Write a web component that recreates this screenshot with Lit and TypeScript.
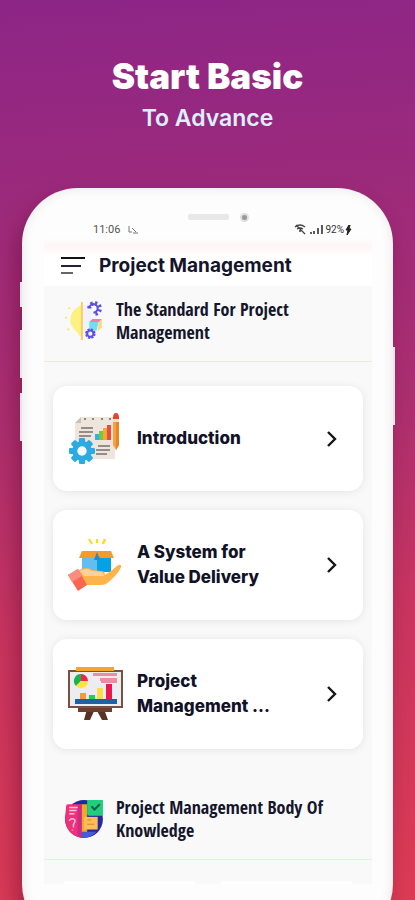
import { LitElement, html, css, svg } from "lit";
import { customElement } from "lit/decorators.js";

const gear = (cx: number, cy: number, r: number, color: string, hole: string) => svg`
  <g transform="translate(${cx} ${cy})" fill=${color}>
    ${[0, 45, 90, 135].map(
      (a) => svg`<rect x=${-r * 0.24} y=${-r} width=${r * 0.48} height=${r * 2} rx=${r * 0.1} transform="rotate(${a})"/>`
    )}
    <circle r=${r * 0.76}/><circle r=${r * 0.36} fill=${hole}/>
  </g>`;

const ideaIcon = html`<svg viewBox="0 0 38 38" aria-hidden="true">
  <path d="M17 4v29h-3c0-4-8-7-8-14S10 6 17 4z" fill="#fdf27f"/>
  <path d="M17 1v36" stroke="#f8cf62" stroke-width="2"/>
  <g fill="#fbe36a"><circle cx="5" cy="7" r="1"/><circle cx="2" cy="16" r="1"/><circle cx="4" cy="27" r="1"/></g>
  <path d="M18 4h8v28h-8z" fill="#f3f1ff"/>
  <path d="M24 20l3-3h9l-2 3z" fill="#f17fae"/><path d="M24 20h9l-2 8h-7z" fill="#77dcf0"/><path d="M33 20l3-3v8l-4 4z" fill="#f8dc83"/>
  <g fill="none" stroke="#5a50e6">
    <path d="M24 7a4 4 0 1 1 4 4" stroke-width="2"/>
    <path d="M24 7a5 5 0 1 1 4 5" stroke-width="4" stroke-dasharray="2 2"/>
    <circle cx="25" cy="31" r="3" stroke-width="2"/><circle cx="25" cy="31" r="4" stroke-width="2" stroke-dasharray="2 1.15"/>
  </g>
</svg>`;

const bookIcon = html`<svg viewBox="0 0 38 38" aria-hidden="true">
  <circle cx="19" cy="19" r="18" fill="#26299b"/>
  <path d="M2 7q0-2 2-2h13v32Q2 34 1 19z" fill="#f22f79"/><path d="M13 6h4v31l-4-2z" fill="#c92c83"/>
  <path d="M17 5h5v27h-5z" fill="#f4a62a"/>
  <path d="M19 17h13v12H19z" fill="#fdbd59"/><path d="M17 31h14q-6 6-14 6z" fill="#465bd8"/>
  <path d="M22 1h15v15H24q-2 0-2-2z" fill="#20cf7d"/>
  <path d="M26 7l3 3 5-5" fill="none" stroke="#14624e" stroke-width="2"/>
  <g fill="none" stroke="#ffc7dc" stroke-width="1.4"><path d="M5 8h8M5 11h7M5 14h5M5 21q1-3 4-2t0 5v3M8 29v1"/></g>
  <path d="M22 20h4M22 24h7" stroke="#d9892c"/>
</svg>`;

const reportIcon = html`<svg viewBox="0 0 56 56" aria-hidden="true">
  <path d="M14 6h34v42H8V12z" fill="#eee5dc"/><path d="M14 6v6H8z" fill="#cdbfb3"/>
  <path d="M17 8h2M25 8h2M34 8h2M42 8h2" stroke="#8d8580" stroke-width="2"/>
  <path d="M14 17h12M12 21h14M12 25h12M31 35h12M29 39h14M29 43h11" stroke="#77706d" stroke-width="1.4"/>
  <path d="M28 23h4v6h-4z" fill="#28b5ee"/><path d="M32 20h4v9h-4z" fill="#73c83c"/><path d="M36 17h4v12h-4z" fill="#f5a637"/><path d="M40 14h4v15h-4z" fill="#ed493c"/>
  <path d="M46 9h6v25l-3 5-3-5z" fill="#f7a13a"/><path d="M49 9h3v25l-3 5z" fill="#e98428"/><path d="M46 8h6v3h-6z" fill="#dce3e6"/><path d="M46 7q0-5 3-5t3 5v1h-6z" fill="#e44235"/>
  ${gear(15, 40, 13, "#2babe2", "#f3fbff")}
</svg>`;

const deliveryIcon = html`<svg viewBox="0 0 56 56" aria-hidden="true">
  <path d="M22 2l3 5M30 2v4M38 2l-2 5" stroke="#ffd82b" stroke-width="2.4"/>
  <path d="M15 19h15v16H15z" fill="#62bdf1"/><path d="M30 19h14v16H30z" fill="#05a1e5"/>
  <path d="M15 14h29l3 7H33l-3-4-3 4H12z" fill="#f59a2c"/><path d="M30 15l3 8h-6z" fill="#278bc7"/>
  <path d="M10 35q8-7 15-2l9 1q4 0 4 4 9-6 13-10 4-1 3 2-3 8-15 17-2 1-6 1H19z" fill="#feb34b"/>
  <path d="M13 34q7-4 12 0l9 1q3 1 3 4H17z" fill="#ffd19a"/>
  <path d="M1 38l10-6 9 16-9 6z" fill="#f86750"/><path d="M1 38l10-6 4 7-10 6z" fill="#fa8d7d"/>
</svg>`;

const boardIcon = html`<svg viewBox="0 0 56 56" aria-hidden="true">
  <path d="M20 43h8l-5 11h-6zM29 43h8l4 11h-6z" fill="#583225"/>
  <path d="M11 41h34v5H11z" fill="#6c3e2c"/>
  <path d="M1 4h55v38H1z" fill="#78513f"/><path d="M3 6h51v34H3z" fill="#ecedf1"/>
  <path d="M9 1h38v4H9z" fill="#f6a22d"/>
  <path d="M14 15V8a7 7 0 0 1 7 7z" fill="#ef234d"/>
  <path d="M14 15V8a7 7 0 0 0-5 12z" fill="#16b64c"/><path d="M14 15h7a7 7 0 0 1-12 5z" fill="#ffe340"/>
  <path d="M26 7h24v3H26zM33 12h17v3H33zM34 15h16v2H34z" fill="#ee8da0"/>
  <path d="M13 27h6v7h-6z" fill="#f69b33"/><path d="M22 29h6v5h-6z" fill="#1ad647"/><path d="M30 22h6v12h-6z" fill="#ffdc48"/><path d="M39 18h6v16h-6z" fill="#eb174f"/>
  <path d="M8 33h42v5H8z" fill="#1c62a8"/>
</svg>`;

@customElement("section-heading")
class SectionHeading extends LitElement {
  static properties = { label: {}, icon: { attribute: false } };
  declare label: string;
  declare icon: unknown;
  static styles = css`
    :host { display: block; border-bottom: 1px solid #fce3d6; }
    .row { display: flex; align-items: center; gap: 12px; padding: 12px 24px 17px 20px; min-height: 46px; }
    .icon { width: 40px; flex: none; }
    .icon svg { display: block; width: 40px; height: 40px; }
    h2 { margin: 0; color: #15152b; font: 700 18px/23px "Open Sans Condensed", "Liberation Sans Narrow", "Liberation Sans", sans-serif; }
  `;
  render() {
    return html`<div class="row"><div class="icon">${this.icon}</div><h2>${this.label}</h2></div>`;
  }
}

@customElement("topic-card")
class TopicCard extends LitElement {
  static properties = { label: {}, icon: { attribute: false } };
  declare label: string;
  declare icon: unknown;
  static styles = css`
    :host { display: block; }
    button { box-sizing: border-box; width: 100%; min-height: 105px; padding: 30px 25px 30px 14px; display: flex; align-items: center; gap: 14px;
      border: 0; border-radius: 14px; background: #fff; box-shadow: 0 1px 8px #00000016; text-align: left; color: #111127;
      font: 800 17px/25px Inter, "Open Sans", sans-serif; }
    .icon { display: block; width: 56px; height: 56px; flex: none; margin: -6px 0; }
    .icon svg, .chevron { display: block; }
    .label { flex: 1; max-width: 144px; display: -webkit-box; -webkit-box-orient: vertical; -webkit-line-clamp: 2; overflow: hidden; }
    .chevron { width: 12px; height: 18px; flex: none; margin-left: auto; }
  `;
  render() {
    return html`<button type="button">
      <span class="icon">${this.icon}</span><span class="label">${this.label}</span>
      <svg class="chevron" viewBox="0 0 12 18" aria-hidden="true"><path d="M2 2l7 7-7 7" fill="none" stroke="#151515" stroke-width="2.4"/></svg>
    </button>`;
  }
}

@customElement("app-root")
class AppRoot extends LitElement {
  static styles = css`
    :host { display: block; height: 100vh; overflow: hidden; font-family: Inter, "Open Sans", sans-serif;
      background: linear-gradient(176deg, #8d2587 0%, #9c2a7b 22%, #ac2f70 46%, #c93560 68%, #dd3b54 100%); }
    .hero { padding-top: 53px; text-align: center; color: #fff; }
    h1 { margin: 0; font-size: 35px; line-height: 46px; font-weight: 900; }
    .hero p { margin: 4px 0 0; font-size: 23px; line-height: 30px; font-weight: 600; color: #dcefff; }
    .phone { position: relative; box-sizing: border-box; margin: 55px 22px 0; padding: 24px 21px 56px 22px; border-radius: 56px;
      background: #fdfdfd; box-shadow: inset 0 0 12px #00000018, -6px 12px 22px #5a002866; }
    .key { position: absolute; width: 2px; background: #e6e6e8; }
    .k1 { left: -2px; top: 94px; height: 25px; } .k2 { left: -2px; top: 142px; height: 48px; } .k3 { left: -2px; top: 205px; height: 48px; }
    .k4 { right: -2px; top: 159px; height: 78px; }
    .notch { display: flex; justify-content: flex-end; align-items: center; gap: 11px; height: 10px; padding-right: 123px; }
    .speaker { width: 41px; height: 6px; border-radius: 2px; background: #e8e8e8; }
    .lens { width: 5px; height: 5px; border: 2px solid #dedede; border-radius: 50%; background: #999; }
    .status { display: flex; align-items: center; height: 16px; padding: 0 20px 0 49px; font: 400 11px/16px Roboto, sans-serif; color: #555; }
    .note { width: 10px; height: 8px; margin-left: 8px; }
    .signals { width: 30px; height: 12px; margin-left: auto; }
    .battery { font-size: 10px; color: #333; margin-left: 1px; }
    .bolt { width: 7px; height: 10px; margin-left: 1px; }
    .bar { box-sizing: border-box; display: flex; align-items: center; gap: 14px; height: 48px; padding: 8px 0 0 17px; background: linear-gradient(#fdfdfd, #fdf5f6 8px, #fff 18px, #fff); }
    .menu { border: 0; padding: 0; background: none; width: 24px; height: 20px; }
    .menu svg { display: block; }
    .bar h2 { margin: 0; font-size: 19px; line-height: 28px; font-weight: 700; color: #14142a; }
    main { background: #f9f9fa; }
    .cards { display: grid; gap: 19px; padding: 24px 9px 35px; }
    .next { display: grid; grid-template-columns: 1fr 1fr; gap: 24px; padding: 21px 20px 0; }
    .next div { height: 3px; border-radius: 10px 10px 0 0; background: #fff; }
  `;
  render() {
    return html`
      <header class="hero"><h1>Start Basic</h1><p>To Advance</p></header>
      <div class="phone">
        <i class="key k1"></i><i class="key k2"></i><i class="key k3"></i><i class="key k4"></i>
        <div class="notch"><span class="speaker"></span><span class="lens"></span></div>
        <div class="status">
          <span>11:06</span>
          <svg class="note" viewBox="0 0 10 8" aria-hidden="true"><path d="M1 0v6h3M4 2l4 4M5 7h5" fill="none" stroke="#777"/></svg>
          <svg class="signals" viewBox="0 0 30 12" aria-hidden="true">
            <path d="M1 3q5-4 10 0M3 5q3-2 6 0M5 7h2M2 1l9 9" fill="none" stroke="#444" stroke-width="1.3"/>
            <path d="M17 8v2M20 7v3M24 4v6M28 1v9" stroke="#333" stroke-width="1.6"/>
          </svg>
          <span class="battery">92%</span>
          <svg class="bolt" viewBox="0 0 7 10" aria-hidden="true"><path d="M4 0L1 5h2L2 10l4-6H4l1-4z" fill="#222" stroke="#222"/></svg>
        </div>
        <div class="bar">
          <button class="menu" type="button" aria-label="Open menu">
            <svg width="24" height="20" viewBox="0 0 24 20" fill="none"><path d="M0 2h24" stroke="#111" stroke-width="2"/><path d="M0 10h20" stroke="#223" stroke-width="2"/><path d="M0 17h12" stroke="#666" stroke-width="2"/></svg>
          </button>
          <h2>Project Management</h2>
        </div>
        <main>
          <section-heading label="The Standard For Project Management" .icon=${ideaIcon}></section-heading>
          <div class="cards">
            <topic-card label="Introduction" .icon=${reportIcon}></topic-card>
            <topic-card label="A System for Value Delivery" .icon=${deliveryIcon}></topic-card>
            <topic-card label="Project Management …" .icon=${boardIcon}></topic-card>
          </div>
          <section-heading label="Project Management Body Of Knowledge" .icon=${bookIcon}></section-heading>
          <div class="next"><div></div><div></div></div>
        </main>
      </div>`;
  }
}
